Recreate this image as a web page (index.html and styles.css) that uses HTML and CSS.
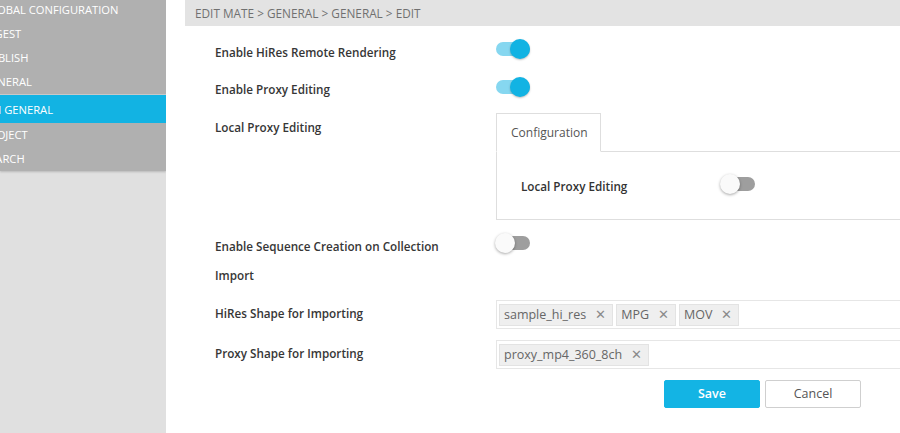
FILE: index.html
```
<!DOCTYPE html>
<html lang="en">
<head>
<meta charset="utf-8">
<title>Edit Mate - General</title>
<link rel="stylesheet" href="styles.css">
</head>
<body>
<div class="app">
  <aside class="sidebar">
    <nav class="nav">
      <a class="nav-item">GLOBAL CONFIGURATION</a>
      <a class="nav-item">INGEST</a>
      <a class="nav-item">PUBLISH</a>
      <a class="nav-item nav-item-last">GENERAL</a>
      <a class="nav-item active">EM GENERAL</a>
      <a class="nav-item">PROJECT</a>
      <a class="nav-item">SEARCH</a>
    </nav>
  </aside>

  <main class="main">
    <div class="breadcrumb">EDIT MATE &gt; GENERAL &gt; GENERAL &gt; EDIT</div>

    <form class="form">
      <div class="row">
        <label class="label">Enable HiRes Remote Rendering</label>
        <div class="control"><span class="toggle on"><span class="knob"></span></span></div>
      </div>

      <div class="row">
        <label class="label">Enable Proxy Editing</label>
        <div class="control"><span class="toggle on"><span class="knob"></span></span></div>
      </div>

      <div class="row row-panel">
        <label class="label">Local Proxy Editing</label>
        <div class="control">
          <div class="panel">
            <div class="tabs">
              <span class="tab">Configuration</span>
            </div>
            <div class="panel-body">
              <div class="sub-row">
                <label class="sub-label">Local Proxy Editing</label>
                <span class="toggle"><span class="knob"></span></span>
              </div>
            </div>
          </div>
        </div>
      </div>

      <div class="row row-wrap">
        <label class="label">Enable Sequence Creation on Collection Import</label>
        <div class="control"><span class="toggle"><span class="knob"></span></span></div>
      </div>

      <div class="row row-tags">
        <label class="label">HiRes Shape for Importing</label>
        <div class="control">
          <div class="tag-input">
            <span class="tag">sample_hi_res <span class="tag-x">✕</span></span>
            <span class="tag">MPG <span class="tag-x">✕</span></span>
            <span class="tag">MOV <span class="tag-x">✕</span></span>
          </div>
        </div>
      </div>

      <div class="row row-tags">
        <label class="label">Proxy Shape for Importing</label>
        <div class="control">
          <div class="tag-input">
            <span class="tag">proxy_mp4_360_8ch <span class="tag-x">✕</span></span>
          </div>
        </div>
      </div>

      <div class="actions">
        <button type="button" class="btn btn-primary">Save</button>
        <button type="button" class="btn btn-default">Cancel</button>
      </div>
    </form>
  </main>
</div>
</body>
</html>
```
FILE: styles.css
```
* {
  box-sizing: border-box;
}

html, body {
  margin: 0;
  height: 100%;
  background: #fff;
  font-family: "Open Sans", "Noto Sans", sans-serif;
  font-size: 12px;
  color: #333;
  overflow: hidden;
}

.app {
  display: flex;
  height: 433px;
}

/* left navigation */
.sidebar {
  width: 166px;
  flex: none;
  background: #e0e0e0;
  overflow: hidden;
}

.nav {
  display: flex;
  flex-direction: column;
  margin-top: -2px;
  background: #b0b0b0;
  box-shadow: 0 1px 2px rgba(0, 0, 0, 0.18);
}

.nav-item {
  display: block;
  height: 24px;
  line-height: 24px;
  margin-left: -17px;
  color: #fff;
  font-size: 11.2px;
  white-space: nowrap;
}

.nav-item-last {
  border-bottom: 1px solid #c8c8c8;
  height: 25px;
}

.nav-item.active {
  background: #12b3e3;
  height: 28px;
  line-height: 30px;
  margin-left: 0;
  padding-left: 0;
  text-indent: -15px;
}

/* main area */
.main {
  flex: 1;
  padding-left: 19px;
  min-width: 0;
}

.breadcrumb {
  height: 26px;
  line-height: 27px;
  padding-left: 10px;
  background: #e3e3e3;
  color: #707070;
  font-size: 11.8px;
}

.form {
  padding: 12px 0 0 30px;
}

.row {
  display: flex;
  align-items: flex-start;
  margin-bottom: 9px;
}

.label {
  width: 240px;
  margin-right: 41px;
  flex: none;
  line-height: 29px;
  margin-top: -0.5px;
  font-size: 11.7px;
  font-weight: 600;
  color: #363636;
}

.control {
  flex: 1;
  min-width: 0;
}

/* switch */
.toggle {
  position: relative;
  display: inline-block;
  width: 36px;
  height: 22px;
  vertical-align: middle;
}

.toggle::before {
  content: "";
  position: absolute;
  left: 1px;
  top: 4px;
  width: 34px;
  height: 14px;
  border-radius: 7px;
  background: #9e9e9e;
}

.toggle .knob {
  position: absolute;
  left: 0;
  top: 1px;
  width: 20px;
  height: 20px;
  border-radius: 50%;
  background: #fafafa;
  box-shadow: 0 1px 3px rgba(0, 0, 0, 0.35);
}

.toggle.on::before {
  background: #86d7f0;
}

.toggle.on .knob {
  left: 15px;
  background: #12b3e3;
  box-shadow: 0 1px 2px rgba(0, 0, 0, 0.25);
}

.row > .control > .toggle {
  margin-left: -1px;
}

/* tabbed panel */
.row-panel {
  margin-bottom: 12px;
}

.panel {
  border: 1px solid #dedede;
  border-top: 0;
  border-right: 0;
  margin-right: -20px;
}

.tabs {
  display: flex;
  border-bottom: 1px solid #dedede;
  height: 39px;
}

.tab {
  height: 39px;
  width: 105px;
  margin-left: -1px;
  padding-left: 14px;
  line-height: 38px;
  border: 1px solid #dedede;
  border-bottom-color: #fff;
  background: #fff;
  color: #555;
}

.panel-body {
  padding: 18px 24px 20px 24px;
}

.sub-row {
  display: flex;
  align-items: center;
  height: 29px;
}

.sub-label {
  width: 200px;
  font-size: 11.7px;
  font-weight: 600;
  padding-top: 3px;
}

.sub-row .toggle {
  margin-top: -2px;
  margin-left: -1px;
}

/* wrapped label row */
.row-wrap {
  margin-bottom: 10px;
}

/* tag inputs */
.row-tags {
  margin-bottom: 11px;
}

.tag-input {
  display: flex;
  gap: 3px;
  height: 29px;
  padding: 3px 2px;
  border: 1px solid #e6e6e6;
  border-right: 0;
  margin-right: -20px;
}

.tag {
  display: inline-flex;
  align-items: center;
  height: 22px;
  padding: 0 6px 0 4px;
  background: #efefef;
  border: 1px solid #e3e3e3;
  color: #666;
  font-size: 12.5px;
  white-space: nowrap;
}

.tag-x {
  margin-left: 9px;
  color: #8a8a8a;
  font-size: 13px;
  line-height: 1;
}

/* buttons */
.actions {
  display: flex;
  gap: 5px;
  padding-left: 449px;
  margin-top: 1px;
}

.btn {
  width: 96px;
  height: 28px;
  font-family: inherit;
  font-size: 12.5px;
  border-radius: 2px;
  cursor: pointer;
}

.btn-primary {
  background: #13b4e4;
  border: 1px solid #13b4e4;
  color: #fff;
  font-weight: 600;
}

.btn-default {
  background: #fff;
  border: 1px solid #cfcfcf;
  color: #555;
}
```
